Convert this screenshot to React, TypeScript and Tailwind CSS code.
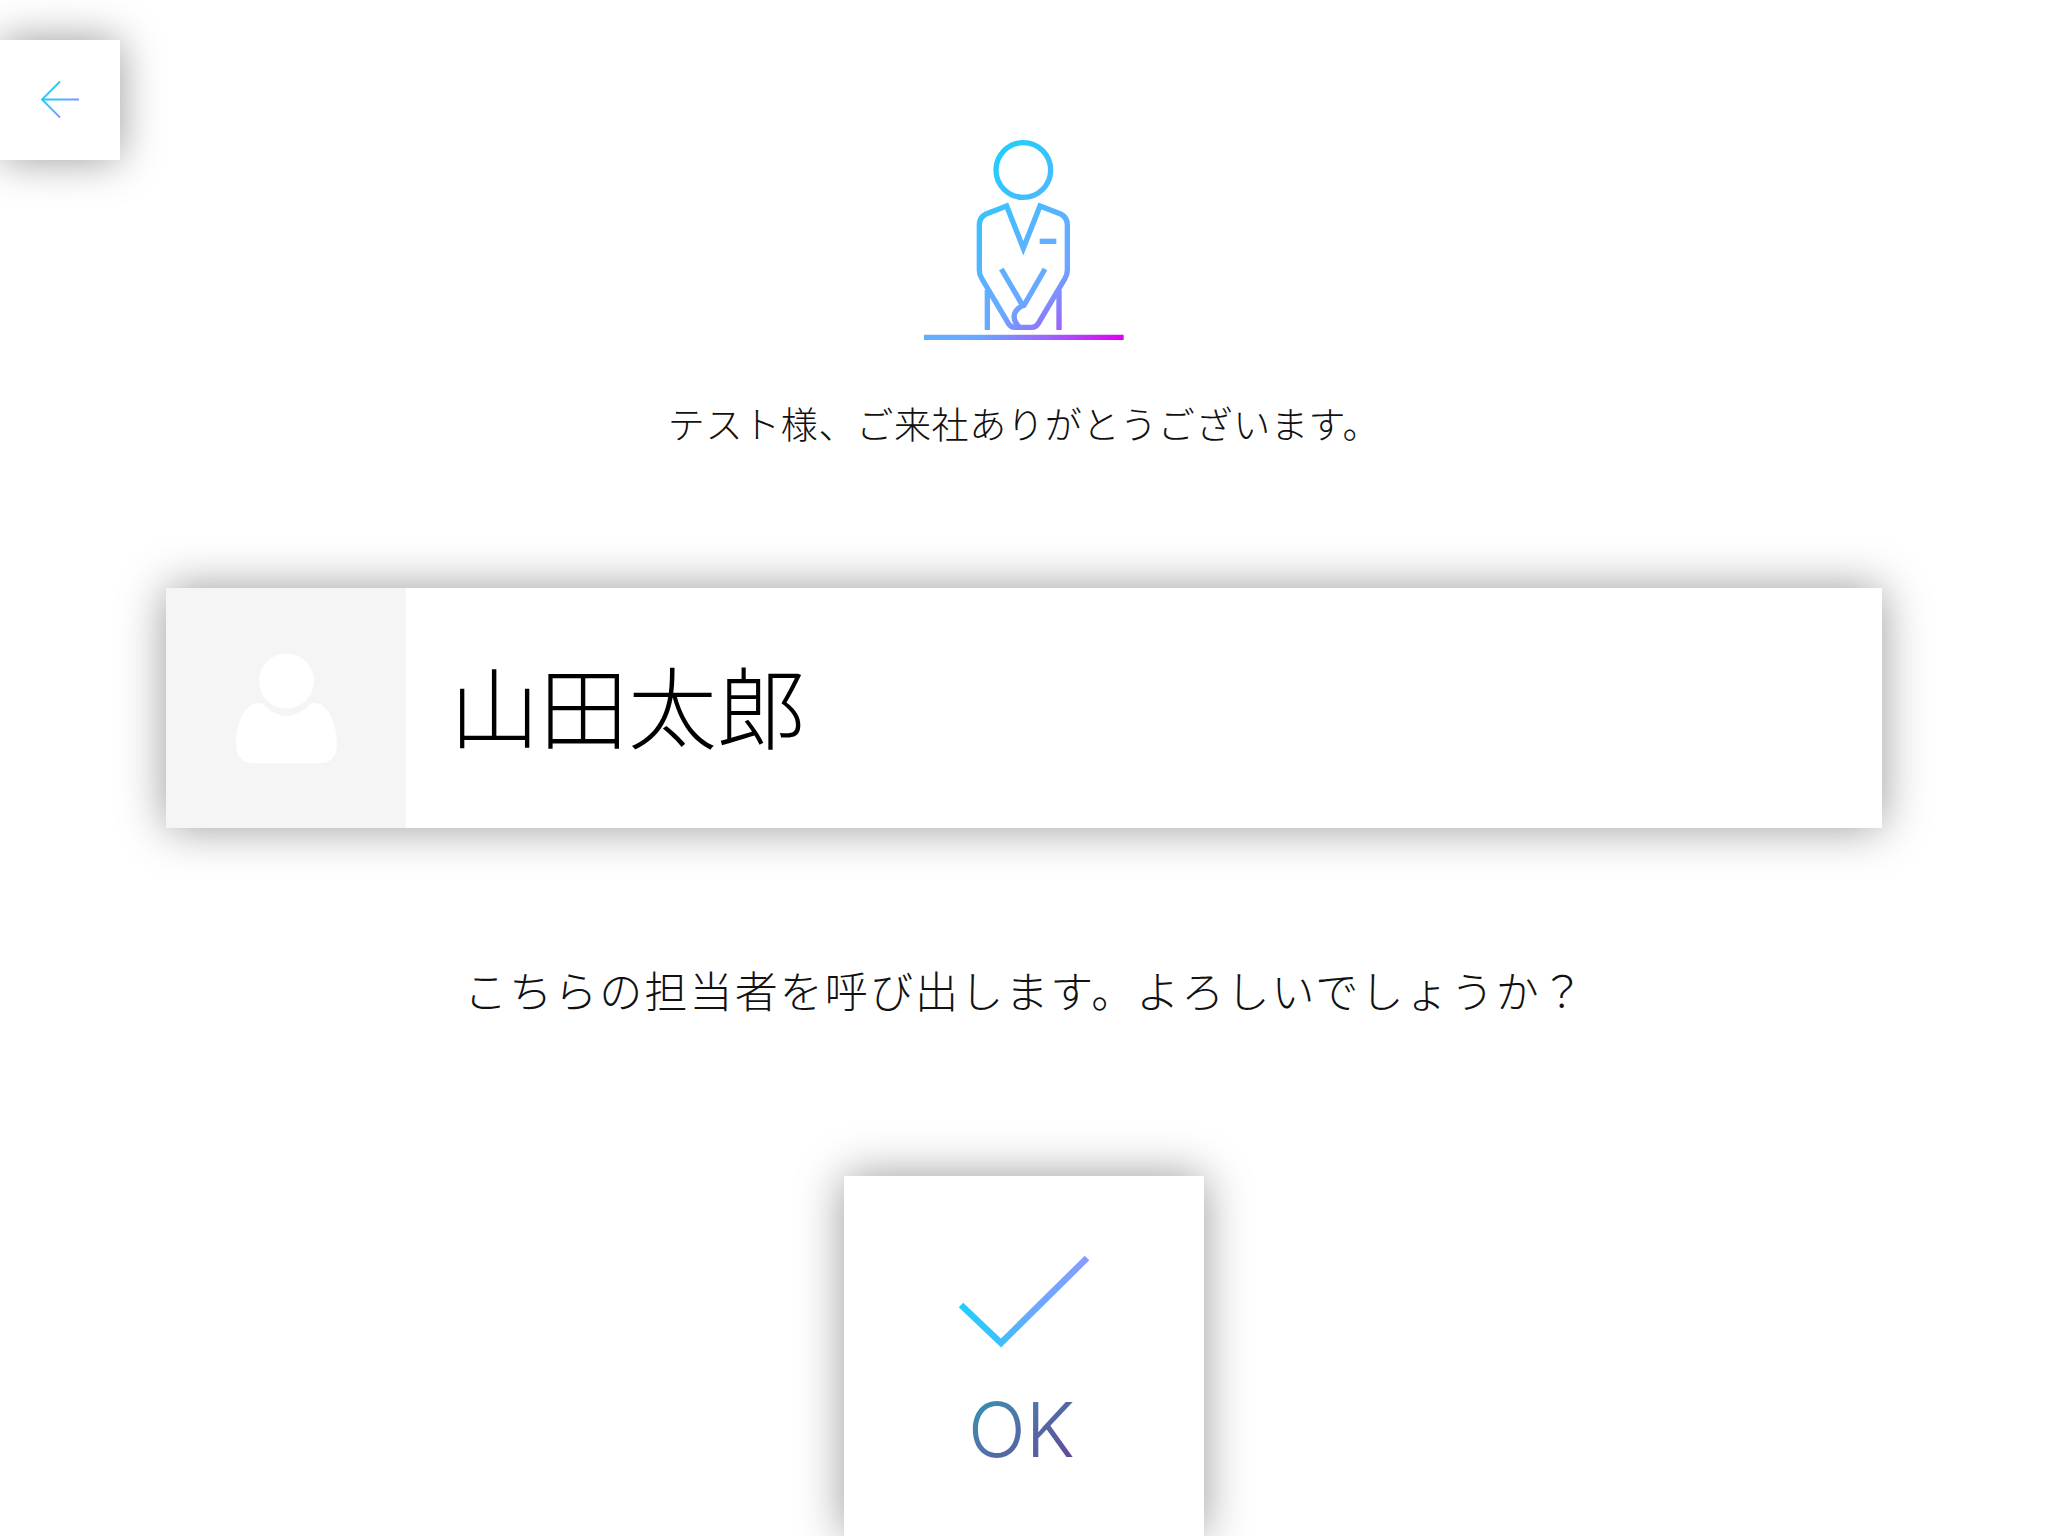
import React from "react";

const jpFont = "font-['Noto_Sans_CJK_JP','Noto_Sans',sans-serif]";

const Greeter: React.FC = () => (
  <svg viewBox="132 60 600 600" className="w-[200px] h-[200px] block" fill="none">
    <defs>
      <linearGradient id="greeterGrad" gradientUnits="userSpaceOnUse" x1="300" y1="120" x2="726" y2="653">
        <stop offset="0" stopColor="#1fcffb" />
        <stop offset="0.45" stopColor="#5fb0ff" />
        <stop offset="0.6" stopColor="#6aa8ff" />
        <stop offset="0.8" stopColor="#a060fc" />
        <stop offset="1" stopColor="#e000f0" />
      </linearGradient>
    </defs>
    <g stroke="url(#greeterGrad)" strokeWidth="16">
      <circle cx="430" cy="150" r="82" />
      <path d="M380 258 L318 282 Q298 292 298 315 L298 450 Q298 465 305 475 L385 610 Q392 622 405 622 L455 622 Q468 622 475 610 L555 475 Q562 465 562 450 L562 315 Q562 292 542 282 L480 258 L430 385 Z" />
      <path d="M479 364 L529 364" />
      <path d="M364 447 L430 560" />
      <path d="M495 447 L432 556 Q404 566 402 590 Q404 610 420 622" />
      <path d="M322 510 L322 630" />
      <path d="M537 510 L537 630" />
      <path d="M129 652 L731 652" />
    </g>
  </svg>
);

const BackArrow: React.FC = () => (
  <svg viewBox="0 0 120 120" className="w-[120px] h-[120px] block" fill="none">
    <defs>
      <linearGradient id="backGrad" gradientUnits="userSpaceOnUse" x1="50" y1="50" x2="85" y2="85">
        <stop offset="0.15" stopColor="#2cc4fc" />
        <stop offset="0.4" stopColor="#66aaff" />
        <stop offset="0.6" stopColor="#9a80ff" />
      </linearGradient>
    </defs>
    <path d="M79 59.5 L42 59.5 M60 41.5 L42 59.5 L60 77.5" stroke="url(#backGrad)" strokeWidth="1.8" />
  </svg>
);

const Avatar: React.FC = () => (
  <svg viewBox="0 0 102 111" className="w-[102px] h-[111px] block ml-[2px]" fill="#ffffff">
    <circle cx="50.5" cy="28" r="27.5" />
    <path d="M23 50 C27 50 28 52 31 55 C36 59 43 63 50.5 63 C58 63 65 59 70 55 C73 52 75 50 78 50 C93 50 101 72 101 92 C101 102 95 110 86 110 L15 110 C6 110 0 102 0 92 C0 72 8 50 23 50 Z" />
  </svg>
);

const Check: React.FC = () => (
  <svg viewBox="0 0 132 96" className="w-[132px] h-[96px] block" fill="none">
    <defs>
      <linearGradient id="checkGrad" gradientUnits="userSpaceOnUse" x1="0" y1="50" x2="130" y2="0">
        <stop offset="0" stopColor="#1fcffb" />
        <stop offset="0.45" stopColor="#66aaff" />
        <stop offset="1" stopColor="#8a9cff" />
      </linearGradient>
    </defs>
    <path d="M3 50 L43 88 L129 3" stroke="url(#checkGrad)" strokeWidth="6.5" />
  </svg>
);

export default function App() {
  return (
    <div className={`w-[2048px] h-[1536px] overflow-hidden bg-white flex flex-col items-center ${jpFont}`}>
      {/* Header */}
      <div className="w-full grid grid-cols-[120px_1fr_120px] pt-10">
        <button className="w-[120px] h-[120px] bg-white shadow-[0_0_44px_rgba(0,0,0,0.4)]">
          <BackArrow />
        </button>
        <div className="flex justify-center pt-[100px]">
          <Greeter />
        </div>
      </div>

      <p className="mt-[58px] h-[50px] leading-[50px] text-[37px] font-extralight text-[#111111] tracking-[0.7px] whitespace-nowrap">
        テスト様、ご来社ありがとうございます。
      </p>

      {/* Staff card */}
      <div className="mt-[140px] w-[1716px] h-[240px] flex bg-white shadow-[0_0_44px_rgba(0,0,0,0.4)]">
        <div className="w-[240px] h-full bg-[#f5f5f5] flex items-center justify-center">
          <Avatar />
        </div>
        <div className="flex-1 flex items-center pl-[44px] pb-[8px]">
          <span className="text-[89px] font-extralight text-black">山田太郎</span>
        </div>
      </div>

      <p className="mt-[133px] h-[56px] leading-[56px] text-[43px] font-extralight text-[#111111] tracking-[2.1px] pl-[2px] whitespace-nowrap">
        こちらの担当者を呼び出します。よろしいでしょうか？
      </p>

      <button className="mt-[159px] w-[360px] h-[360px] shrink-0 bg-white shadow-[0_0_44px_rgba(0,0,0,0.4)] flex flex-col items-center pt-[79px]">
        <Check />
        <span className="mt-[34px] mr-[5px] font-['Inter',sans-serif] text-[76px] leading-[88px] font-[260] bg-gradient-to-br from-[#1a9ab5] to-[#5f3f98] bg-clip-text text-transparent">
          OK
        </span>
      </button>
    </div>
  );
}
